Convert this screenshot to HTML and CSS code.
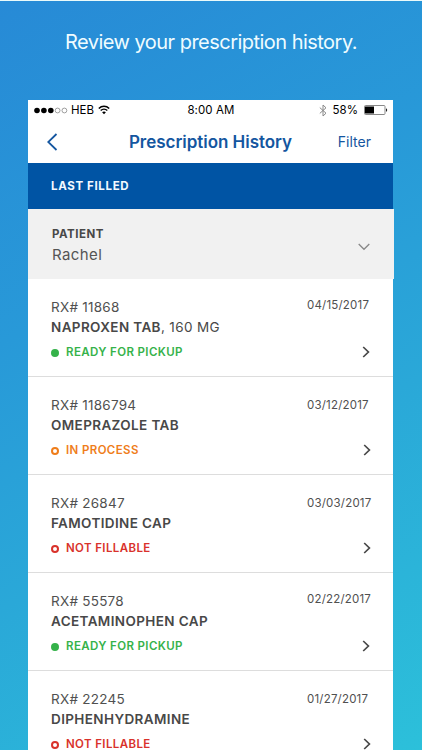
FILE: index.html
```
<!DOCTYPE html>
<html lang="en">
<head>
    <meta charset="utf-8">
    <title>Prescription History</title>
    <link rel="stylesheet" href="styles.css">
</head>
<body>
    <h1 class="headline">Review your prescription history.</h1>

    <div class="phone">
        <div class="status-bar">
            <div class="carrier">
                <svg class="signal" width="34" height="7" viewBox="0 0 34 7">
                    <circle cx="3" cy="3.5" r="2.8"/>
                    <circle cx="9.9" cy="3.5" r="2.8"/>
                    <circle cx="16.8" cy="3.5" r="2.8"/>
                    <circle class="off" cx="23.6" cy="3.5" r="2.4"/>
                    <circle class="off" cx="30.4" cy="3.5" r="2.4"/>
                </svg>
                <span class="carrier-name">HEB</span>
                <svg class="wifi" width="12" height="10" viewBox="0 0 12 10">
                    <path d="M.8 3.5C3.8.6 8.2.6 11.2 3.5M2.7 5.5c1.9-1.8 4.7-1.8 6.6 0"/>
                    <path class="core" d="M6 9.3 4.1 7.3c1.1-1 2.7-1 3.8 0z"/>
                </svg>
            </div>
            <div class="time">8:00 AM</div>
            <div class="power">
                <svg class="bluetooth" width="8" height="13" viewBox="0 0 8 13">
                    <path d="M.8 3.6 7 9.2 4 12V1l3 2.8L.8 9.4"/>
                </svg>
                <span class="percent">58%</span>
                <svg class="battery" width="24" height="10" viewBox="0 0 24 10">
                    <rect class="case" x=".5" y=".5" width="20.5" height="9" rx="1"/>
                    <rect x="1" y="1.5" width="9" height="7"/>
                    <path d="M22 3.2c1.6.5 1.6 3.1 0 3.6z"/>
                </svg>
            </div>
        </div>

        <div class="nav">
            <svg class="back" width="11" height="18" viewBox="0 0 11 18">
                <path d="M9.5 1 1.2 9l8.3 8"/>
            </svg>
            <h2 class="title">Prescription History</h2>
            <span class="filter">Filter</span>
        </div>

        <div class="sort"><span class="sort-text">LAST FILLED</span></div>

        <div class="patient">
            <div>
                <div class="patient-label">PATIENT</div>
                <div class="patient-name">Rachel</div>
            </div>
            <svg class="down" width="12" height="8" viewBox="0 0 12 8">
                <path d="M.7 1 6 6.3 11.3 1"/>
            </svg>
        </div>

        <div class="list">
            <div class="rx">
                <div class="info">
                    <div class="number">RX# 11868</div>
                    <div class="drug"><b>NAPROXEN TAB</b>, 160 MG</div>
                    <div class="state ready"><i class="dot"></i><span>READY FOR PICKUP</span></div>
                </div>
                <div class="side">
                    <div class="date">04/15/2017</div>
                    <svg class="next" width="8" height="12" viewBox="0 0 8 12"><path d="M1.2 1 6.4 6l-5.2 5"/></svg>
                </div>
            </div>
            <div class="rx lower">
                <div class="info">
                    <div class="number">RX# 1186794</div>
                    <div class="drug"><b>OMEPRAZOLE TAB</b></div>
                    <div class="state process"><i class="dot"></i><span>IN PROCESS</span></div>
                </div>
                <div class="side">
                    <div class="date">03/12/2017</div>
                    <svg class="next" width="8" height="12" viewBox="0 0 8 12"><path d="M1.2 1 6.4 6l-5.2 5"/></svg>
                </div>
            </div>
            <div class="rx lower">
                <div class="info">
                    <div class="number">RX# 26847</div>
                    <div class="drug"><b>FAMOTIDINE CAP</b></div>
                    <div class="state unfillable"><i class="dot"></i><span>NOT FILLABLE</span></div>
                </div>
                <div class="side">
                    <div class="date">03/03/2017</div>
                    <svg class="next" width="8" height="12" viewBox="0 0 8 12"><path d="M1.2 1 6.4 6l-5.2 5"/></svg>
                </div>
            </div>
            <div class="rx">
                <div class="info">
                    <div class="number">RX# 55578</div>
                    <div class="drug"><b>ACETAMINOPHEN CAP</b></div>
                    <div class="state ready"><i class="dot"></i><span>READY FOR PICKUP</span></div>
                </div>
                <div class="side">
                    <div class="date">02/22/2017</div>
                    <svg class="next" width="8" height="12" viewBox="0 0 8 12"><path d="M1.2 1 6.4 6l-5.2 5"/></svg>
                </div>
            </div>
            <div class="rx lower">
                <div class="info">
                    <div class="number">RX# 22245</div>
                    <div class="drug"><b>DIPHENHYDRAMINE</b></div>
                    <div class="state unfillable"><i class="dot"></i><span>NOT FILLABLE</span></div>
                </div>
                <div class="side">
                    <div class="date">01/27/2017</div>
                    <svg class="next" width="8" height="12" viewBox="0 0 8 12"><path d="M1.2 1 6.4 6l-5.2 5"/></svg>
                </div>
            </div>
        </div>
    </div>
</body>
</html>
```

FILE: styles.css
```
* {
    box-sizing: border-box;
}
body {
    margin: 0;
    height: 750px;
    overflow: hidden;
    display: flex;
    flex-direction: column;
    border-top: 1px solid #eafafa;
    background: linear-gradient(151deg, #278ad6 0%, #2899d8 35%, #2aa8d8 62%, #2cc0da 100%);
    font-family: Inter, "Liberation Sans", sans-serif;
    color: #484848;
}
h1, h2 {
    margin: 0;
}
svg {
    display: block;
    flex: none;
}
svg path {
    fill: none;
    stroke: currentColor;
}
.headline {
    height: 99px;
    padding-top: 27px;
    text-align: center;
    font-size: 20px;
    line-height: 28px;
    font-weight: 400;
    letter-spacing: -0.53px;
    color: #effcff;
}
.phone {
    width: 365px;
    height: 650px;
    margin-left: 28px;
    background: #fff;
}

/* status bar */
.status-bar {
    display: grid;
    grid-template-columns: 1fr auto 1fr;
    align-items: center;
    height: 20px;
    padding: 0 5px 0 6px;
    font-size: 11.5px;
    color: #000;
}
.carrier, .power {
    display: flex;
    align-items: center;
}
.power {
    justify-content: flex-end;
}
.signal .off {
    fill: none;
    stroke: #777;
    stroke-width: 0.7;
}
.carrier-name {
    margin: 0 4px 0 3px;
}
.time {
    letter-spacing: 0.1px;
}
.wifi path {
    stroke-width: 1.5;
}
.wifi .core {
    fill: #000;
    stroke: none;
}
.bluetooth {
    color: #888;
    margin-right: 6px;
}
.percent {
    margin-right: 6px;
}
.battery .case {
    fill: none;
    stroke: #888;
}
.battery path {
    fill: #222;
    stroke: none;
}

/* nav */
.nav {
    display: grid;
    grid-template-columns: 80px 1fr 80px;
    align-items: center;
    height: 43px;
    color: #1456a0;
}
.back {
    margin: 0 0 0 19px;
    stroke-width: 1.8;
}
.title {
    text-align: center;
    font-size: 17px;
    line-height: 22px;
    font-weight: 600;
    letter-spacing: -0.03px;
    white-space: nowrap;
}
.filter {
    justify-self: end;
    margin-right: 22px;
    font-size: 14px;
}

.sort {
    height: 46px;
    padding-left: 23px;
    display: flex;
    align-items: center;
    background: #0054a4;
    color: #f2f9ff;
    font-size: 11.5px;
    font-weight: 700;
    letter-spacing: 0.65px;
}

.patient {
    width: 366px;
    height: 70px;
    padding: 17px 24px 0;
    display: flex;
    justify-content: space-between;
    background: #f1f1f1;
}
.patient-label {
    font-size: 11.5px;
    line-height: 17px;
    font-weight: 700;
    letter-spacing: 0.5px;
}
.patient-name {
    margin-top: 2px;
    font-size: 15px;
    line-height: 20px;
    letter-spacing: 0.4px;
    color: #555;
}
.down {
    margin-top: 17px;
    color: #888;
    stroke-width: 1.3;
}

/* prescriptions */
.rx {
    display: flex;
    justify-content: space-between;
    height: 98px;
    padding: 18px 0 0 23px;
    border-bottom: 1px solid #ddd;
}
.number {
    font-size: 13.5px;
    line-height: 20px;
    letter-spacing: 0.25px;
    color: #505050;
}
.drug {
    font-size: 13.5px;
    line-height: 21px;
    letter-spacing: 0.38px;
}
.drug b {
    font-weight: 600;
}
.state {
    display: flex;
    align-items: center;
    margin-top: 6px;
    font-size: 11.5px;
    line-height: 17px;
    font-weight: 600;
    letter-spacing: 0.38px;
}
.dot {
    width: 8px;
    height: 8px;
    margin-right: 7px;
    border: 2px solid currentColor;
    border-radius: 50%;
}
.ready {
    color: #35b24a;
}
.ready .dot {
    background: currentColor;
}
.process {
    color: #ef7d1a;
}
.unfillable {
    color: #d9322b;
}
.side {
    width: 86px;
}
.date {
    margin-top: -2px;
    font-size: 11.5px;
    line-height: 20px;
    letter-spacing: 0.2px;
    color: #505050;
}
.next {
    margin: 31px 0 0 55px;
    stroke-width: 1.7;
}
.lower .date {
    margin-top: 0;
}
.lower .next {
    margin: 29px 0 0 56px;
}
```
